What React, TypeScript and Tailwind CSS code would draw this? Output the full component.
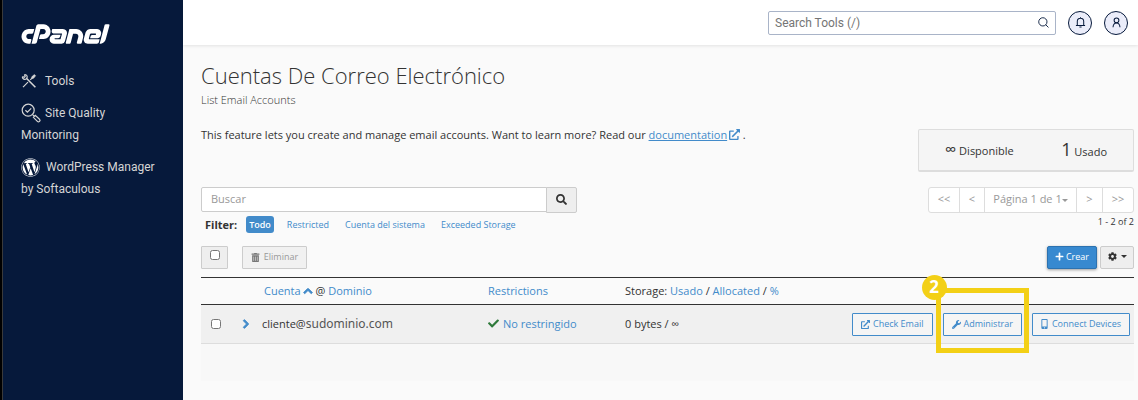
import type { ReactNode } from 'react';
import { FaCheck, FaChevronRight, FaChevronUp, FaCog, FaExternalLinkAlt, FaMobileAlt, FaPlus, FaSearch, FaTrashAlt, FaWordpress, FaWrench } from 'react-icons/fa';
import { SiCpanel } from 'react-icons/si';

const FILTERS = ['Todo', 'Restricted', 'Cuenta del sistema', 'Exceeded Storage'];

function ToolsIcon() {
  return (
    <svg viewBox="0 0 16 16" className="inline-block size-4 mr-2 align-[-4px]" fill="none" stroke="currentColor">
      <path d="M2 14.2 7 9.2M9.3 6.9l3.2-3.2" strokeWidth="1.2" />
      <path d="M11 3.6l2.4-2 1.2 1.2-2 2.4-1.3.4-.7-.7z" fill="currentColor" strokeWidth="0.6" />
      <path d="M5.4 5.2 14.4 14.2" strokeWidth="1.6" />
      <path d="M3.6 1.5a2.4 2.4 0 1 1-2.2 2.2M3.4 1.5l.8 1.9-.8.9-2-.8" strokeWidth="1.2" />
    </svg>
  );
}

function QualityIcon() {
  return (
    <svg viewBox="0 0 20 20" className="inline-block size-5 mr-1 align-[-6px]" fill="none" stroke="currentColor" strokeWidth="1.2">
      <circle cx="7.2" cy="7.2" r="6" />
      <path d="M4.4 7.3 6.4 9.2 10.2 5.4" />
      <path d="M11.6 11.6 13.2 13.2M12.4 14.3l1.9-1.9 4.2 3.9a1.4 1.4 0 0 1-2.1 2.1z" />
    </svg>
  );
}

function BellIcon() {
  return (
    <svg viewBox="0 0 12 12" className="size-[11px]" fill="none" stroke="currentColor" strokeWidth="1.1">
      <path d="M1 9.2h10M2.5 9V4.8a3.5 3.5 0 0 1 7 0V9M4.8 11h2.4M6 .4v1" />
    </svg>
  );
}

function UserIcon() {
  return (
    <svg viewBox="0 0 12 12" className="size-[11px]" fill="none" stroke="currentColor" strokeWidth="1.1">
      <circle cx="6" cy="3.6" r="2.6" />
      <path d="M2.2 11.2c.2-3 1.6-4.6 3.8-4.6s3.6 1.6 3.8 4.6" />
    </svg>
  );
}

function Caret() {
  return <span className="inline-block border-x-3 border-t-3 border-x-transparent align-middle" />;
}

function RowButton({ children }: { children: ReactNode }) {
  return (
    <button type="button" className="inline-flex h-[23px] items-center gap-[3px] whitespace-nowrap rounded-[1px] border border-[#428bca] bg-[#f5f5f5] px-2 text-[9px] text-[#428bca]">
      {children}
    </button>
  );
}

function Sidebar() {
  return (
    <aside className="w-[183px] shrink-0 border-l-2 border-black bg-[#06193b] text-[12px] leading-[22px] text-[#d5d5d5] font-[Roboto,sans-serif]">
      <div className="min-h-full border-l border-[#3a3a3a] pl-[18px] pr-6 pt-[23px]">
        <a href="#home" aria-label="cPanel" className="block text-white">
          <SiCpanel viewBox="0 9 24 6" className="h-[22px] w-[89px]" />
        </a>
        <nav className="mt-[25px] flex flex-col gap-[10px]">
          <a href="#tools" className="block"><ToolsIcon />Tools</a>
          <a href="#quality" className="block"><QualityIcon />Site Quality Monitoring</a>
          <a href="#wordpress" className="block">
            <FaWordpress className="mr-[6px] inline-block size-[19px] align-[-6px] text-white" />
            WordPress Manager by Softaculous
          </a>
        </nav>
      </div>
    </aside>
  );
}

function TopBar() {
  return (
    <header className="flex h-[45px] items-center justify-end gap-3 bg-white pr-[10px] shadow-[0_1px_3px_#00000018]">
      <label className="flex h-6 w-[288px] items-center rounded-[2px] border border-[#a9b4c8] px-[6px] font-[Roboto,sans-serif]">
        <input type="text" aria-label="Search Tools" placeholder="Search Tools (/)" className="min-w-0 flex-1 text-[12px] outline-none placeholder:text-[#757575]" />
        <svg viewBox="0 0 12 12" className="size-[11px] text-[#06193b]" fill="none" stroke="currentColor">
          <circle cx="5.3" cy="5.3" r="4.5" />
          <path d="M8.4 8.4 11.4 11.4" />
        </svg>
      </label>
      <button type="button" aria-label="Notifications" className="flex size-6 items-center justify-center rounded-full border border-[#06193b] bg-[#ebedfa] text-[#06193b]"><BellIcon /></button>
      <button type="button" aria-label="Account" className="flex size-6 items-center justify-center rounded-full border border-[#06193b] bg-[#ebedfa] text-[#06193b]"><UserIcon /></button>
    </header>
  );
}

function Pager() {
  return (
    <div>
      <div className="flex h-[26px] divide-x divide-[#ddd] rounded-[3px] border border-[#ddd] bg-white text-[11px] text-[#999]">
        <button type="button" className="w-[31px] pb-[2px]">&lt;&lt;</button>
        <button type="button" className="w-[25px] pb-[2px]">&lt;</button>
        <button type="button" className="w-[92px] pb-[2px]">Página 1 de 1<Caret /></button>
        <button type="button" className="w-[26px] pb-[2px]">&gt;</button>
        <button type="button" className="w-[30px] pb-[2px]">&gt;&gt;</button>
      </div>
      <p className="text-right text-[9px] leading-[18px]">1 - 2 of 2</p>
    </div>
  );
}

function AccountsTable() {
  return (
    <table className="mt-2 w-full table-fixed border-t border-[#333] text-left text-[11px]">
      <colgroup>
        <col className="w-[40px]" />
        <col className="w-[21px]" />
        <col className="w-[226px]" />
        <col className="w-[137px]" />
        <col className="w-[180px]" />
        <col />
      </colgroup>
      <thead>
        <tr className="h-[27px] border-b border-[#333] *:font-normal">
          <th /><th />
          <th className="pl-[2px]">
            <a href="#cuenta" className="text-[#428bca]">Cuenta<FaChevronUp strokeWidth="50" className="ml-[2px] inline size-[10px] align-[-1px]" /></a>
            {' @ '}
            <a href="#dominio" className="text-[#428bca]">Dominio</a>
          </th>
          <th><a href="#restrictions" className="text-[#428bca]">Restrictions</a></th>
          <th>
            Storage: <a href="#usado" className="text-[#428bca]">Usado</a> / <a href="#allocated" className="text-[#428bca]">Allocated</a> / <a href="#percent" className="text-[#428bca]">%</a>
          </th>
          <th />
        </tr>
      </thead>
      <tbody>
        <tr className="h-[39px] border-b border-[#ddd] bg-[#f0f0f0]">
          <td className="pl-[10px]"><input type="checkbox" aria-label="cliente@sudominio.com" className="block size-[10px]" /></td>
          <td><button type="button" aria-label="Expand" className="block text-[#428bca]"><FaChevronRight strokeWidth="50" className="size-[10px]" /></button></td>
          <td>cliente@<span className="text-[12px] text-[#555] font-['Noto_Sans',sans-serif]">sudominio.com</span></td>
          <td><FaCheck className="mr-1 inline size-[11px] align-[-1px] text-[#2f7a3b]" /><a href="#norestringido" className="text-[#428bca]">No restringido</a></td>
          <td>0 bytes / ∞</td>
          <td className="pr-1">
            <div className="flex justify-end gap-[10px]">
              <RowButton><FaExternalLinkAlt className="size-[9px]" />Check Email</RowButton>
              <div className="relative flex">
                <RowButton><FaWrench className="size-[9px]" />Administrar</RowButton>
                <div className="pointer-events-none absolute -left-[7px] -right-[7px] -top-[25px] -bottom-[17px] border-[5px] border-[#f3d016]" />
                <span className="absolute -left-[21px] -top-[38px] flex size-[25px] items-center justify-center rounded-full bg-[#f3d016] text-[17px] font-bold text-white">2</span>
              </div>
              <RowButton><FaMobileAlt className="mr-px h-[10px] w-[7px]" />Connect Devices</RowButton>
            </div>
          </td>
        </tr>
      </tbody>
    </table>
  );
}

export default function App() {
  return (
    <div className="flex min-h-screen bg-[#fafafa] text-[#333] font-['Open_Sans',sans-serif]">
      <Sidebar />
      <div className="min-w-0 flex-1">
        <TopBar />
        <main className="pl-[18px] pr-1 pt-[14px] text-[11px] leading-4">
          <h1 className="text-[22px] font-light leading-[33px]">Cuentas De Correo Electrónico</h1>
          <p className="font-light">List Email Accounts</p>
          <div className="mt-[19px] flex items-start justify-between">
            <p>
              This feature lets you create and manage email accounts. Want to learn more? Read our{' '}
              <a href="#documentation" className="text-[#428bca]"><span className="underline">documentation</span> <FaExternalLinkAlt className="-ml-px inline size-[11px] align-[-1px]" /></a> .
            </p>
            <div className="mt-[2px] flex h-[43px] w-[216px] items-center justify-between rounded-[2px] border border-b-2 border-[#ddd] bg-[#f5f5f5] px-[26px]">
              <span><span className="text-[16px]">∞</span> Disponible</span>
              <span><span className="text-[18px]">1</span> Usado</span>
            </div>
          </div>

          <div className="mt-[15px] flex items-start justify-between">
            <div>
              <div className="flex w-[376px]">
                <input type="text" aria-label="Buscar" placeholder="Buscar" className="h-[25px] min-w-0 flex-1 rounded-l-[2px] border border-[#ccc] bg-white px-[9px] pb-[2px] outline-none placeholder:text-[#999]" />
                <button type="button" aria-label="Search" className="-ml-px flex h-[26px] w-[31px] items-center justify-center rounded-r-[2px] border border-[#ccc] bg-[#eee] pb-[2px]"><FaSearch className="size-[11px]" /></button>
              </div>
              <div className="mt-[3px] flex items-center pl-1 text-[9px]">
                <span className="mr-[9px] text-[11px] font-bold">Filter:</span>
                {FILTERS.map((name, i) => (
                  <button
                    key={name}
                    type="button"
                    className={i === 0 ? 'mr-[10px] h-[17px] rounded-[3px] bg-[#428bca] px-[3px] font-semibold text-white' : 'mr-[10px] px-[3px] text-[#428bca]'}
                  >
                    {name}
                  </button>
                ))}
              </div>
            </div>
            <Pager />
          </div>

          <div className="mt-[13px] flex items-start text-[9px]">
            <label className="flex h-[23px] w-[27px] justify-center rounded-[1px] border border-[#ccc] bg-[#eee] pt-[3px]">
              <input type="checkbox" aria-label="Select all" className="size-[10px]" />
            </label>
            <button type="button" disabled className="ml-[14px] flex h-[23px] w-[65px] items-center justify-center gap-1 rounded-[1px] border border-[#ccc] bg-[#f1f1f1] pb-px text-[#999]"><FaTrashAlt className="size-[9px] text-[#777]" />Eliminar</button>
            <button type="button" className="ml-auto flex h-[23px] w-[50px] items-center justify-center gap-[2px] rounded-[2px] border border-[#2c72b0] bg-[#3789d0] pb-[2px] text-white shadow-[0_1px_3px_#00000060]"><FaPlus className="size-[9px]" />Crear</button>
            <button type="button" aria-label="Settings" className="ml-[3px] flex h-[23px] w-[34px] items-center justify-center gap-1 rounded-[2px] border border-[#ccc] bg-[#eee] pb-[2px]"><FaCog className="size-[9px]" /><Caret /></button>
          </div>

          <AccountsTable />
          <div className="h-[37px] bg-[#f8f8f8]" />
        </main>
      </div>
    </div>
  );
}
